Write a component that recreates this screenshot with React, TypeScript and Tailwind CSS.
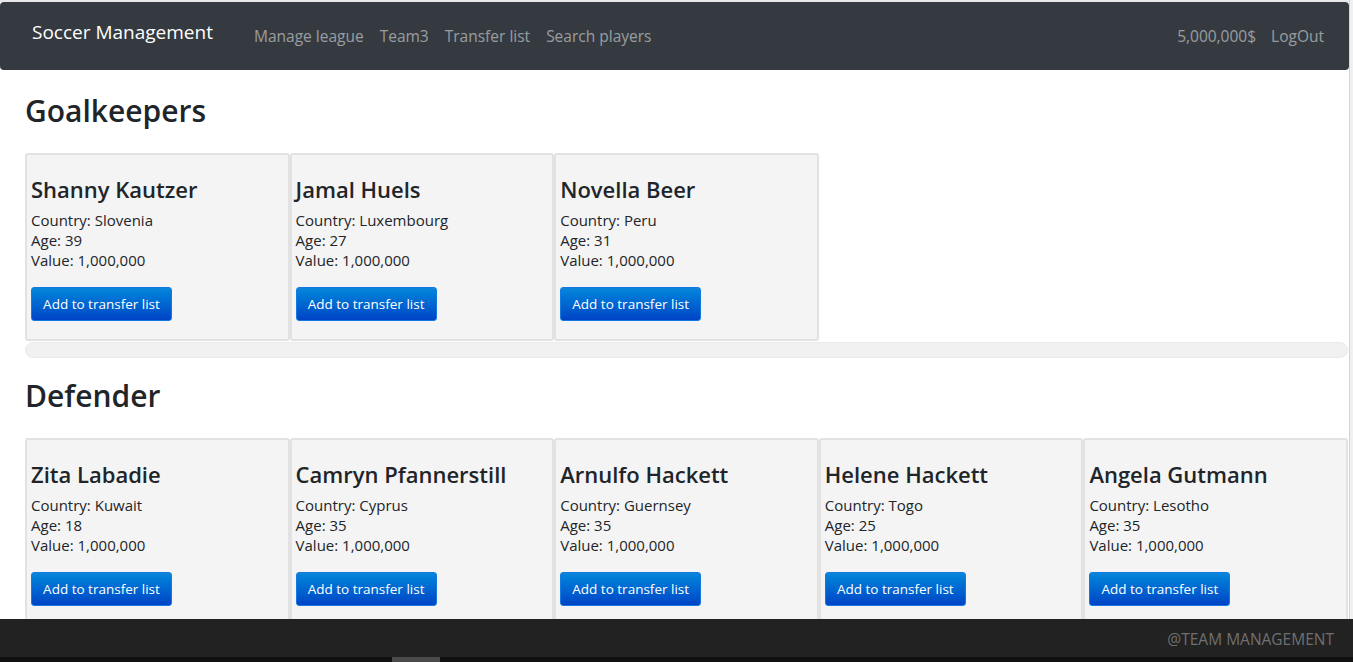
const goalkeepers = [
  { name: "Shanny Kautzer", country: "Slovenia", age: 39 },
  { name: "Jamal Huels", country: "Luxembourg", age: 27 },
  { name: "Novella Beer", country: "Peru", age: 31 },
];

const defenders = [
  { name: "Zita Labadie", country: "Kuwait", age: 18 },
  { name: "Camryn Pfannerstill", country: "Cyprus", age: 35 },
  { name: "Arnulfo Hackett", country: "Guernsey", age: 35 },
  { name: "Helene Hackett", country: "Togo", age: 25 },
  { name: "Angela Gutmann", country: "Lesotho", age: 35 },
];

type Player = { name: string; country: string; age: number };

function PlayerCard({ player }: { player: Player }) {
  return (
    <div className="w-1/5 shrink-0 rounded-[3px] border-2 border-[#e2e2e2] bg-[#f4f4f4] px-[4px] pt-[20px] pb-[18px]">
      <h4 className="mb-[6px] text-[22px] leading-[29px] font-semibold text-[#212529]">{player.name}</h4>
      <p className="text-[15px] leading-[20px] text-[#212529]">Country: {player.country}</p>
      <p className="text-[15px] leading-[20px] text-[#212529]">Age: {player.age}</p>
      <p className="text-[15px] leading-[20px] text-[#212529]">Value: 1,000,000</p>
      <button
        type="button"
        className="mt-[17px] h-[34px] w-[141px] rounded-[3px] border border-[#1479e0] bg-gradient-to-b from-[#0b86da] to-[#0043c6] text-[13.5px] text-white"
      >
        Add to transfer list
      </button>
    </div>
  );
}

export default function App() {
  return (
    <div className="flex min-h-screen bg-white font-['Open_Sans',sans-serif]">
      <div className="w-[1349px] shrink-0 pb-[60px]">
        <div className="h-[2px] bg-[#e8e8e8]" />
        <nav className="flex h-[68px] items-center rounded-[4px] bg-[#343a40] pr-[25px] pl-[32px]">
          <span className="mr-[41px] -mt-[8px] text-[19px] text-white">Soccer Management</span>
          <div className="mt-[2px] flex gap-[16px] text-[15.5px] text-white/50">
            <a>Manage league</a>
            <a>Team3</a>
            <a>Transfer list</a>
            <a>Search players</a>
          </div>
          <div className="mt-[2px] ml-auto flex gap-[15px] text-[15.5px] text-white/50">
            <span>5,000,000$</span>
            <a>LogOut</a>
          </div>
        </nav>
        <main className="pr-px pl-[25px]">
          <h2 className="mt-[22px] mb-[23px] text-[30px] leading-[38px] font-semibold text-[#212529]">Goalkeepers</h2>
          <div className="flex">
            {goalkeepers.map((p) => (
              <PlayerCard key={p.name} player={p} />
            ))}
          </div>
          <div className="mt-px h-[16px] rounded-full border border-[#ebebeb] bg-[#f1f1f1]" />
          <h2 className="mt-[19px] mb-[23px] text-[30px] leading-[38px] font-semibold text-[#212529]">Defender</h2>
          <div className="flex">
            {defenders.map((p) => (
              <PlayerCard key={p.name} player={p} />
            ))}
          </div>
        </main>
      </div>
      <div className="w-[4px] shrink-0 border-l border-[#d4d4d4] bg-[#f0f0f0]" />
      <footer className="fixed right-0 bottom-0 left-0">
        <div className="flex h-[38px] items-center justify-end bg-[#222222] pt-[3px] pr-[19px] text-[15.5px] text-[#707070]">
          @TEAM MANAGEMENT
        </div>
        <div className="h-[5px] bg-[#111111] pl-[392px]">
          <div className="h-full w-[48px] bg-[#4a4a4a]" />
        </div>
      </footer>
    </div>
  );
}
